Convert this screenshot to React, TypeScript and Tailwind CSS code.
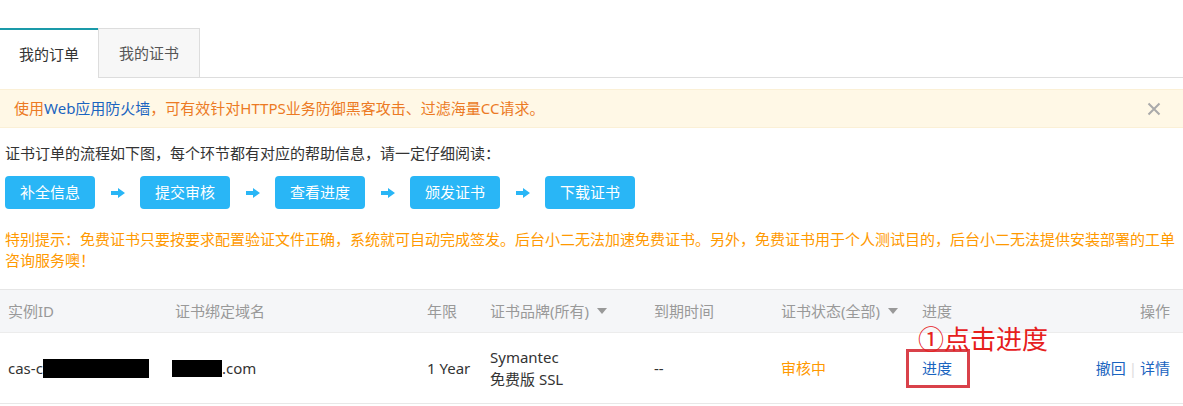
import React from "react";

const steps = ["补全信息", "提交审核", "查看进度", "颁发证书", "下载证书"];

const Arrow = () => (
  <svg width="16" height="12" viewBox="0 0 16 12">
    <path d="M1 4h7V1l7 5-7 5V8H1z" fill="#29b6f6" />
  </svg>
);

const Caret = () => (
  <span className="ml-[8px] inline-block w-0 h-0 border-l-[5px] border-r-[5px] border-t-[6px] border-l-transparent border-r-transparent border-t-[#999] align-middle" />
);

const cols = "grid grid-cols-[167px_252px_63px_164px_127px_141px_100px_1fr] pl-[8px] pr-[13px] items-center";

export default function App() {
  return (
    <div
      className="w-[1183px] h-[406px] bg-white overflow-hidden text-[15px] text-[#333]"
      style={{ fontFamily: '"Noto Sans", "Noto Sans CJK SC", sans-serif' }}
    >
      {/* tabs */}
      <div className="mt-[28px] flex h-[50px] border-b border-[#ddd]">
        <div className="w-[98px] h-[50px] -mb-px bg-white border-t-2 border-[#1a9aa9] flex items-center justify-center text-[#333]">
          我的订单
        </div>
        <div className="w-[102px] h-[49px] bg-[#f7f7f7] border border-b-0 border-[#ddd] flex items-center justify-center text-[#555]">
          我的证书
        </div>
      </div>

      {/* notice */}
      <div className="mt-[11px] h-[39px] bg-[#fff8e6] border-y border-[#fbf0d6] flex items-center justify-between pl-[14px] pr-[22px] text-[#ec7a24]">
        <span>
          使用<span className="text-[#1a64c0]">Web应用防火墙</span>，可有效针对HTTPS业务防御黑客攻击、过滤海量CC请求。
        </span>
        <svg width="14" height="14" viewBox="0 0 14 14">
          <path d="M1.5 1.5l11 11M12.5 1.5l-11 11" stroke="#aaa" strokeWidth="2" />
        </svg>
      </div>

      <div className="mt-[15px] pl-[5px] leading-[21px]">
        证书订单的流程如下图，每个环节都有对应的帮助信息，请一定仔细阅读：
      </div>

      {/* steps */}
      <div className="mt-[12px] pl-[5px] flex items-center">
        {steps.map((s, i) => (
          <React.Fragment key={s}>
            <div className="w-[90px] h-[33px] rounded-[4px] bg-[#29b6f6] text-white flex items-center justify-center">
              {s}
            </div>
            {i < steps.length - 1 && (
              <div className="w-[45px] flex justify-center">
                <Arrow />
              </div>
            )}
          </React.Fragment>
        ))}
      </div>

      <div className="mt-[20px] pl-[5px] leading-[21px] text-[#ff9900]">
        特别提示：免费证书只要按要求配置验证文件正确，系统就可自动完成签发。后台小二无法加速免费证书。另外，免费证书用于个人测试目的，后台小二无法提供安装部署的工单
        <br />
        咨询服务噢！
      </div>

      {/* table */}
      <div className="mt-[18px] border-t border-[#e6e6e6]">
        <div className={`${cols} h-[43px] bg-[#f5f6f8] text-[#999] border-b border-[#ececec]`}>
          <div>实例ID</div>
          <div>证书绑定域名</div>
          <div>年限</div>
          <div className="flex items-center">
            证书品牌(所有)
            <Caret />
          </div>
          <div>到期时间</div>
          <div className="flex items-center">
            证书状态(全部)
            <Caret />
          </div>
          <div>进度</div>
          <div className="text-right">操作</div>
        </div>
        <div className={`${cols} h-[71px] border-b border-[#e8e8e8]`}>
          <div className="flex items-center">
            cas-c<span className="inline-block w-[106px] h-[19px] bg-black" />
          </div>
          <div className="flex items-center">
            <span className="inline-block w-[50px] h-[17px] bg-black -ml-[3px]" />
            .com
          </div>
          <div>1 Year</div>
          <div className="leading-[22px]">
            <div>Symantec</div>
            <div>免费版 SSL</div>
          </div>
          <div>--</div>
          <div className="text-[#ff9900]">审核中</div>
          <div className="relative">
            <span className="text-[#1a64c0]">进度</span>
            <div className="absolute left-[-16px] top-[-8px] w-[64px] h-[39px] border-[3px] border-[#d9414a]" />
            <div className="absolute left-[-4px] top-[-33px] text-[26px] leading-[30px] text-[#e6201c] whitespace-nowrap">
              ①点击进度
            </div>
          </div>
          <div className="text-right text-[#1a64c0]">
            撤回<span className="mx-[3px] text-[#ddd]">|</span>详情
          </div>
        </div>
      </div>
    </div>
  );
}
